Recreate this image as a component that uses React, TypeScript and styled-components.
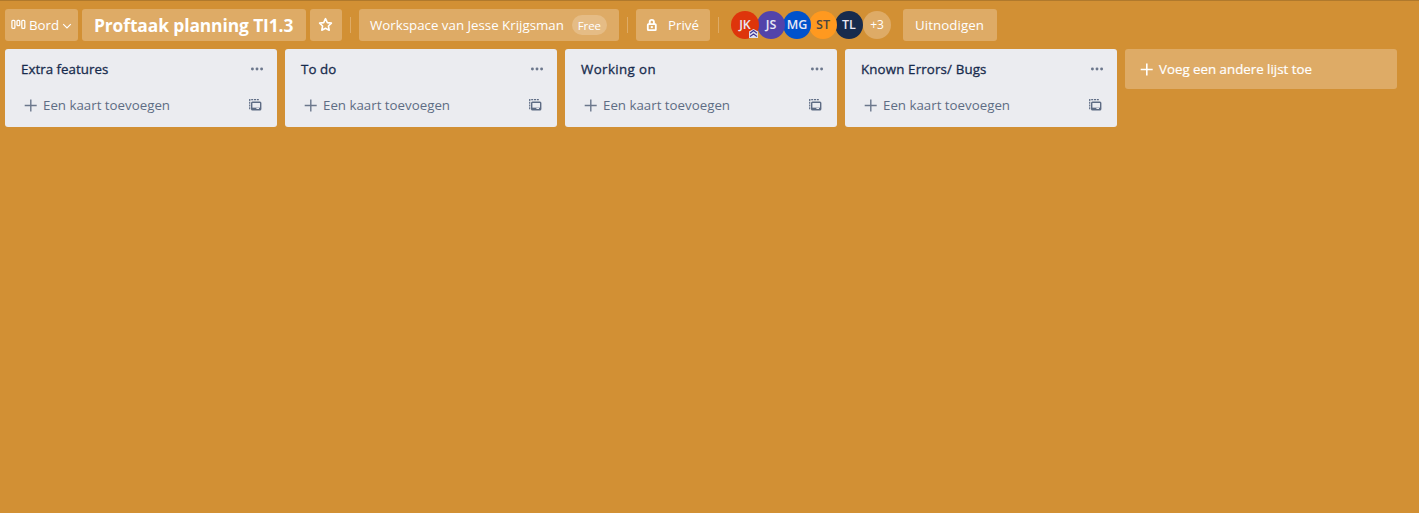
import React from "react";
import styled, { createGlobalStyle } from "styled-components";

const GlobalStyle = createGlobalStyle`
  * { box-sizing: border-box; }
  body { margin: 0; background: #d29034; overflow: hidden; }
`;

const Page = styled.div`
  height: 100vh;
  background: #d29034;
  border-top: 1px solid #b0792c;
  font-family: "Open Sans", "Noto Sans", sans-serif;
  font-size: 13.3px;
  line-height: 20px;
  color: #fff;
`;

const Header = styled.header`
  display: flex;
  align-items: center;
  height: 48px;
  padding-left: 5px;
`;

const HeaderButton = styled.div<{ $width: number; $pad: number; $gap?: number }>`
  display: flex;
  align-items: center;
  flex: none;
  width: ${(p) => p.$width}px;
  height: 32px;
  padding-left: ${(p) => p.$pad}px;
  margin-right: ${(p) => p.$gap ?? 0}px;
  border-radius: 3px;
  background: #deab66;
  white-space: nowrap;
`;

const Label = styled.span<{ $track?: number; $left?: number }>`
  letter-spacing: ${(p) => p.$track ?? 0}px;
  margin-left: ${(p) => p.$left ?? 0}px;
  white-space: nowrap;
`;

const BoardTitle = styled.h1`
  margin: 0;
  font-size: 17.4px;
  line-height: 24px;
  font-weight: 700;
  letter-spacing: -0.1px;
`;

const Divider = styled.span`
  flex: none;
  width: 1px;
  height: 16px;
  margin: 0 8px;
  background: #deab66;
`;

const Badge = styled.span`
  width: 35px;
  height: 20px;
  margin-left: 8px;
  border-radius: 10px;
  background: #e5bc85;
  font-size: 11.5px;
  line-height: 21px;
  letter-spacing: -0.1px;
  text-align: center;
`;

const Members = styled.div`
  display: flex;
  margin: 0 12px 0 4px;
`;

const Avatar = styled.div<{ $bg: string; $fg?: string; $z: number }>`
  position: relative;
  z-index: ${(p) => p.$z};
  width: 28px;
  height: 28px;
  margin-right: -2px;
  border-radius: 50%;
  background: ${(p) => p.$bg};
  color: ${(p) => p.$fg ?? "#e9e8f4"};
  font-size: 12.5px;
  font-weight: 600;
  line-height: 28px;
  text-align: center;
`;

const MoreMembers = styled.div`
  width: 28px;
  height: 28px;
  margin-left: 2px;
  border-radius: 50%;
  background: #deab66;
  font-size: 12px;
  line-height: 28px;
  text-align: center;
`;

const AdminMark = styled.svg`
  position: absolute;
  right: 1px;
  bottom: 1px;
`;

const Board = styled.main`
  display: flex;
  align-items: flex-start;
  gap: 8px;
  padding-left: 5px;
`;

const List = styled.section`
  width: 272px;
  height: 78px;
  padding: 10px 12px 0 16px;
  border-radius: 3px;
  background: #ebecf0;
`;

const ListHeader = styled.div`
  display: flex;
  align-items: center;
  justify-content: space-between;
  height: 20px;
`;

const ListTitle = styled.h2<{ $track: number }>`
  margin: 0;
  font-size: 13.3px;
  line-height: 20px;
  font-weight: 400;
  color: #172b4d;
  -webkit-text-stroke: 0.3px #172b4d;
  letter-spacing: ${(p) => p.$track}px;
`;

const AddCard = styled.div`
  display: flex;
  align-items: center;
  height: 20px;
  margin-top: 16px;
  padding-left: 3px;
  color: #5e6c84;
`;

const TemplateSlot = styled.span`
  display: flex;
  margin-left: auto;
  margin-right: 3px;
`;

const AddList = styled.div`
  display: flex;
  align-items: center;
  width: 272px;
  height: 40px;
  padding-left: 15px;
  border-radius: 3px;
  background: #deab66;
  -webkit-text-stroke: 0.2px #fff;
`;

const BoardIcon = () => (
  <svg width="15" height="12" viewBox="0 0 15 12" fill="none" stroke="#fff" strokeWidth="1.25">
    <rect x="0.9" y="1.4" width="3" height="8" rx="0.9" />
    <rect x="6" y="1.4" width="2.8" height="5.2" rx="0.9" />
    <rect x="10.8" y="1.4" width="3" height="8" rx="0.9" />
  </svg>
);

const ChevronIcon = styled.svg`
  margin: 1px 0 0 3px;
`;

const Chevron = () => (
  <ChevronIcon width="10" height="8" viewBox="0 0 10 8" fill="none" stroke="#fff" strokeWidth="1.1">
    <path d="M1.2 2.1 5 5.9 8.8 2.1" />
  </ChevronIcon>
);

const Star = () => (
  <svg width="16" height="16" viewBox="0 0 16 16" fill="none" stroke="#fff" strokeWidth="1.6" strokeLinejoin="round">
    <path d="M8.5 1.7 10.3 5.6 14.4 6.1 11.4 9 12.2 13.2 8.5 11.2 4.8 13.2 5.6 9 2.6 6.1 6.7 5.6Z" />
  </svg>
);

const Lock = () => (
  <svg width="12" height="14" viewBox="0 0 12 14" fill="none" stroke="#fff">
    <path d="M3.7 6V4a2.1 2.1 0 0 1 4.2 0V6" strokeWidth="1.9" />
    <rect x="1.8" y="6.2" width="8" height="5.9" rx="0.6" strokeWidth="1.8" />
    <rect x="4.8" y="8.1" width="2" height="2" fill="#fff" stroke="none" />
  </svg>
);

const Plus = ({ heavy }: { heavy?: boolean }) => (
  <svg width="13" height="13" viewBox="0 0 13 13" fill="none" stroke={heavy ? "#fff" : "#6b778c"} strokeWidth={heavy ? 1.6 : 1.4}>
    <path d="M6.8 0.5v12M0.7 6.5h12" />
  </svg>
);

const Dots = () => (
  <svg width="16" height="6" viewBox="0 0 16 6" fill="#6b778c">
    <circle cx="3.4" cy="3" r="1.45" />
    <circle cx="8" cy="3" r="1.45" />
    <circle cx="12.6" cy="3" r="1.45" />
  </svg>
);

const TemplateIcon = () => (
  <svg width="14" height="14" viewBox="0 0 14 14" fill="none" stroke="#5e6c84">
    <path d="M1.7 11.3V1.6H11.3" strokeWidth="1.2" strokeDasharray="2 0.8" />
    <rect x="3.7" y="4.2" width="9" height="7.6" rx="0.8" strokeWidth="1.4" />
    <path d="M3.6 10.6h9" strokeWidth="1.9" />
    <rect x="8.4" y="9.9" width="2.6" height="1.1" fill="#ebecf0" stroke="none" />
  </svg>
);

const members = [
  { initials: "JK", bg: "#de350b", admin: true },
  { initials: "JS", bg: "#5243aa" },
  { initials: "MG", bg: "#0052cc" },
  { initials: "ST", bg: "#ff991f", fg: "#4a4540" },
  { initials: "TL", bg: "#172b4d" },
];

const lists = [
  { title: "Extra features", track: 0.03 },
  { title: "To do", track: 0.1 },
  { title: "Working on", track: 0.4 },
  { title: "Known Errors/ Bugs", track: 0.15 },
];

export default function App() {
  return (
    <Page>
      <GlobalStyle />
      <Header>
        <HeaderButton $width={73} $pad={6} $gap={4}>
          <BoardIcon />
          <Label $left={3}>Bord</Label>
          <Chevron />
        </HeaderButton>
        <HeaderButton $width={224} $pad={12} $gap={4}>
          <BoardTitle>Proftaak planning TI1.3</BoardTitle>
        </HeaderButton>
        <HeaderButton $width={32} $pad={7}>
          <Star />
        </HeaderButton>
        <Divider />
        <HeaderButton $width={260} $pad={11}>
          <Label>Workspace van Jesse Krijgsman</Label>
          <Badge>Free</Badge>
        </HeaderButton>
        <Divider />
        <HeaderButton $width={74} $pad={10}>
          <Lock />
          <Label $left={10}>Privé</Label>
        </HeaderButton>
        <Divider />
        <Members>
          {members.map((m, i) => (
            <Avatar key={m.initials} $bg={m.bg} $fg={m.fg} $z={6 - i}>
              {m.initials}
              {m.admin && (
                <AdminMark width="9" height="9" viewBox="0 0 9 9">
                  <path d="M0 2.5 4.5 0 9 2.5V9H0Z" fill="#dfe1ef" />
                  <path d="M1 4.2 4.5 1.6 8 4.2M1 7.6 4.5 5 8 7.6" fill="none" stroke="#403294" strokeWidth="1.2" />
                </AdminMark>
              )}
            </Avatar>
          ))}
          <MoreMembers>+3</MoreMembers>
        </Members>
        <HeaderButton $width={94} $pad={12}>
          <Label $track={0.08}>Uitnodigen</Label>
        </HeaderButton>
      </Header>
      <Board>
        {lists.map((l) => (
          <List key={l.title}>
            <ListHeader>
              <ListTitle $track={l.track}>{l.title}</ListTitle>
              <Dots />
            </ListHeader>
            <AddCard>
              <Plus />
              <Label $left={6}>Een kaart toevoegen</Label>
              <TemplateSlot><TemplateIcon /></TemplateSlot>
            </AddCard>
          </List>
        ))}
        <AddList>
          <Plus heavy />
          <Label $left={6}>Voeg een andere lijst toe</Label>
        </AddList>
      </Board>
    </Page>
  );
}
